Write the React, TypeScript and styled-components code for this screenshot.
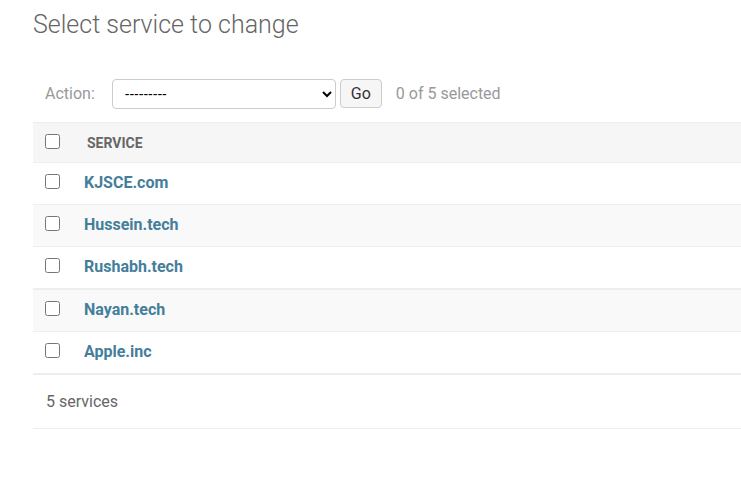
import React from "react";
import styled, { createGlobalStyle } from "styled-components";

const Global = createGlobalStyle`
  html, body { margin: 0; padding: 0; background: #fff; overflow: hidden; }
  body { font-family: Roboto, "Liberation Sans", sans-serif; color: #333; font-size: 15px; }
`;

const Content = styled.div`
  padding: 10px 0 0 33px;
  width: 740px;
`;

const Title = styled.h1`
  margin: 0 0 34px;
  font-size: 25px;
  font-weight: 300;
  color: #666;
  line-height: 30px;
`;

const Actions = styled.div`
  display: flex;
  align-items: center;
  gap: 4px;
  padding: 4px 0 0 12px;
  height: 31px;
  margin-bottom: 13px;
`;

const Label = styled.label`
  color: #999;
  font-size: 16px;
  margin-right: 13px;
`;

const Select = styled.select`
  width: 224px;
  height: 30px;
  border: 1px solid #ccc;
  border-radius: 4px;
  background: #fff;
  font-family: "Liberation Sans", Arial, sans-serif;
  font-size: 14px;
  color: #000;
  padding: 0 8px;
`;

const GoButton = styled.button`
  height: 29px;
  padding: 0 10px;
  border: 1px solid #ccc;
  border-radius: 4px;
  background: #f6f6f6;
  color: #333;
  font-family: Roboto, "Liberation Sans", sans-serif;
  font-size: 16px;
`;

const Counter = styled.span`
  color: #999;
  font-size: 16px;
  margin-left: 10px;
`;

const Table = styled.div`
  display: flex;
  flex-direction: column;
  border-top: 1px solid #eee;
`;

const Row = styled.div<{ $head?: boolean; $alt?: boolean; $thick?: boolean }>`
  display: flex;
  align-items: center;
  height: ${(p) => (p.$head ? 39 : 41)}px;
  border-bottom: ${(p) => (p.$thick ? 2 : 1)}px solid #eee;
  background: ${(p) => (p.$head ? "#f6f6f6" : p.$alt ? "#f9f9f9" : "#fff")};
  padding-left: 12px;
`;

const Check = styled.input<{ $head?: boolean }>`
  margin: 0 0 ${(p) => (p.$head ? 3 : 5)}px;
  width: 15px;
  height: 15px;
`;

const HeadCell = styled.span`
  margin-left: 27px;
  font-size: 14px;
  font-weight: 700;
  color: #666;
  text-transform: uppercase;
`;

const Link = styled.a`
  margin-left: 24px;
  font-size: 16px;
  font-weight: 700;
  color: #447e9b;
  text-decoration: none;
  margin-bottom: 2px;
`;

const Paginator = styled.div`
  display: flex;
  align-items: center;
  height: 53px;
  border-top: 1px solid #eee;
  border-bottom: 1px solid #eee;
  padding-left: 13px;
  color: #666;
  font-size: 16px;
`;

const services = ["KJSCE.com", "Hussein.tech", "Rushabh.tech", "Nayan.tech", "Apple.inc"];

export default function App() {
  return (
    <>
      <Global />
      <Content>
        <Title>Select service to change</Title>
        <Actions>
          <Label>Action:</Label>
          <Select defaultValue="">
            <option value="">---------</option>
            <option value="delete">Delete selected services</option>
          </Select>
          <GoButton>Go</GoButton>
          <Counter>0 of 5 selected</Counter>
        </Actions>
        <Table>
          <Row $head>
            <Check type="checkbox" $head />
            <HeadCell>Service</HeadCell>
          </Row>
          {services.map((s, i) => (
            <Row key={s} $alt={i % 2 === 1} $thick={i === 2}>
              <Check type="checkbox" />
              <Link href="#">{s}</Link>
            </Row>
          ))}
        </Table>
        <Paginator>5 services</Paginator>
      </Content>
    </>
  );
}
